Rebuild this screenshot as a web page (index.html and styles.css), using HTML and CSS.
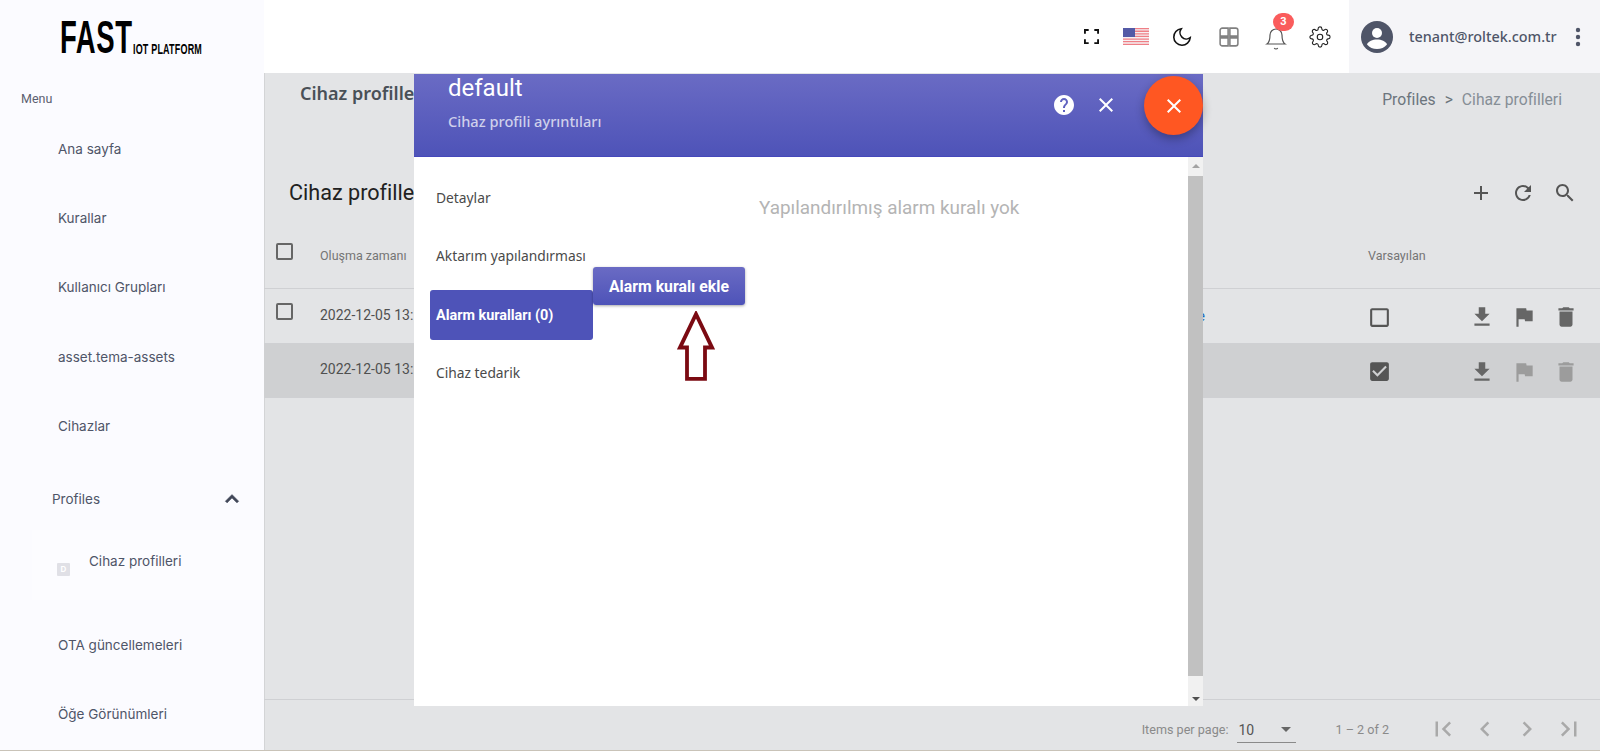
FILE: index.html
```html
<!DOCTYPE html>
<html lang="tr">
<head>
<meta charset="utf-8">
<title>Cihaz profilleri</title>
<link rel="stylesheet" href="styles.css">
</head>
<body>
<div class="app">
  <aside class="sidebar">
    <div class="logo"><span class="logo-big"><b>FAST</b></span><span class="logo-small"><b>IOT PLATFORM</b></span></div>
    <div class="menu-label">Menu</div>
    <nav class="menu">
      <a class="menu-item">Ana sayfa</a>
      <a class="menu-item">Kurallar</a>
      <a class="menu-item">Kullanıcı Grupları</a>
      <a class="menu-item">asset.tema-assets</a>
      <a class="menu-item">Cihazlar</a>
      <div class="menu-group">
        <span>Profiles</span>
        <svg class="chev" viewBox="0 0 24 24"><path d="M12 8l-6 6 1.41 1.41L12 10.83l4.59 4.58L18 14z"/></svg>
      </div>
      <div class="submenu">
        <span class="sub-icon">D</span>
        <span class="sub-text">Cihaz profilleri</span>
      </div>
      <a class="menu-item">OTA güncellemeleri</a>
      <a class="menu-item">Öğe Görünümleri</a>
    </nav>
  </aside>

  <div class="main">
    <header class="topbar">
      <div class="tools">
        <svg class="tool tool-full" viewBox="0 0 16 16"><path d="M1 5V1h4M11 1h4v4M15 11v4h-4M5 15H1v-4" fill="none" stroke="#111" stroke-width="2"/></svg>
        <svg class="tool-flag" viewBox="0 0 26 17">
          <rect width="26" height="17" fill="#f6f0f2"/>
          <path d="M0 0h26v1.3H0zM0 2.6h26v1.3H0zM0 5.2h26v1.3H0zM0 7.8h26v1.3H0zM0 10.4h26v1.3H0zM0 13h26v1.3H0zM0 15.7h26V17H0z" fill="#ef7f86"/>
          <rect width="12" height="9" fill="#545aa6"/>
        </svg>
        <svg class="tool tool-stroke" viewBox="0 0 24 24"><path d="M21 12.79A9 9 0 1 1 11.21 3 7 7 0 0 0 21 12.79z"/></svg>
        <svg class="tool tool-grid" viewBox="0 0 18 18"><path d="M3 1h5.200v7.200H1V3a2 2 0 0 1 2-2zM9.800 1H15a2 2 0 0 1 2 2v5.200H9.800zM1 9.800h7.200V17H3a2 2 0 0 1-2-2zM9.800 9.800H17V15a2 2 0 0 1-2 2H9.800z"/></svg>
        <div class="bell">
          <svg class="tool tool-thin" viewBox="0 0 24 24"><path d="M18 8A6 6 0 0 0 6 8c0 7-3 9-3 9h18s-3-2-3-9"/><path d="M13.73 21a2 2 0 0 1-3.46 0"/></svg>
          <span class="badge">3</span>
        </div>
        <svg class="tool tool-thin" viewBox="0 0 24 24"><circle cx="12" cy="12" r="3"/><path d="M19.4 15a1.65 1.65 0 0 0 .33 1.82l.06.06a2 2 0 0 1 0 2.83 2 2 0 0 1-2.83 0l-.06-.06a1.65 1.65 0 0 0-1.82-.33 1.65 1.65 0 0 0-1 1.51V21a2 2 0 0 1-2 2 2 2 0 0 1-2-2v-.09A1.65 1.65 0 0 0 9 19.4a1.65 1.65 0 0 0-1.82.33l-.06.06a2 2 0 0 1-2.83 0 2 2 0 0 1 0-2.83l.06-.06a1.65 1.65 0 0 0 .33-1.82 1.65 1.65 0 0 0-1.51-1H3a2 2 0 0 1-2-2 2 2 0 0 1 2-2h.09A1.65 1.65 0 0 0 4.6 9a1.65 1.65 0 0 0-.33-1.82l-.06-.06a2 2 0 0 1 0-2.83 2 2 0 0 1 2.83 0l.06.06a1.65 1.65 0 0 0 1.82.33H9a1.65 1.65 0 0 0 1-1.51V3a2 2 0 0 1 2-2 2 2 0 0 1 2 2v.09a1.65 1.65 0 0 0 1 1.51 1.65 1.65 0 0 0 1.82-.33l.06-.06a2 2 0 0 1 2.83 0 2 2 0 0 1 0 2.83l-.06.06a1.65 1.65 0 0 0-.33 1.82V9a1.65 1.65 0 0 0 1.51 1H21a2 2 0 0 1 2 2 2 2 0 0 1-2 2h-.09a1.65 1.65 0 0 0-1.51 1z"/></svg>
      </div>
      <div class="user">
        <svg class="avatar" viewBox="0 0 32 32"><circle cx="16" cy="16" r="16" fill="#4f5568"/><circle cx="16" cy="12" r="5" fill="#fff"/><path d="M6 23.5c1.5-3.5 5.5-5 10-5s8.500 1.500 10 5c-2.500 3-6 4.500-10 4.500s-7.500-1.500-10-4.500z" fill="#fff"/></svg>
        <span class="user-mail">tenant@roltek.com.tr</span>
        <svg class="more" viewBox="0 0 6 20"><circle cx="3" cy="3" r="2.200"/><circle cx="3" cy="10" r="2.200"/><circle cx="3" cy="17" r="2.200"/></svg>
      </div>
    </header>

    <main class="content">
      <div class="page-head">
        <h1 class="page-title">Cihaz profilleri</h1>
        <div class="crumbs"><span>Profiles</span><span class="crumb-sep">&gt;</span><span class="crumb-last">Cihaz profilleri</span></div>
      </div>
      <div class="card-head">
        <h2 class="card-title">Cihaz profilleri</h2>
        <div class="icon-row">
          <svg class="ic ic-dark" viewBox="0 0 24 24"><path d="M19 13h-6v6h-2v-6H5v-2h6V5h2v6h6v2z"/></svg>
          <svg class="ic ic-dark" viewBox="0 0 24 24"><path d="M17.65 6.35C16.2 4.9 14.21 4 12 4c-4.420 0-7.990 3.580-7.990 8s3.570 8 7.990 8c3.730 0 6.840-2.550 7.730-6h-2.080c-.82 2.330-3.040 4-5.650 4-3.310 0-6-2.690-6-6s2.690-6 6-6c1.660 0 3.140.69 4.220 1.780L13 11h7V4l-2.350 2.350z"/></svg>
          <svg class="ic ic-dark" viewBox="0 0 24 24"><path d="M15.500 14h-.79l-.28-.27C15.410 12.590 16 11.110 16 9.500 16 5.910 13.090 3 9.500 3S3 5.910 3 9.500 5.910 16 9.500 16c1.610 0 3.090-.59 4.230-1.570l.27.28v.79l5 4.990L20.490 19l-4.990-5zm-6 0C7.010 14 5 11.990 5 9.500S7.010 5 9.500 5 14 7.010 14 9.500 11.990 14 9.500 14z"/></svg>
        </div>
      </div>

      <div class="table">
        <div class="row row-head">
          <span class="box box-top"></span>
          <span class="cell-head">Oluşma zamanı</span>
          <span></span>
          <span class="cell-head">Varsayılan</span>
          <span></span>
        </div>
        <div class="row">
          <span class="box box-top"></span>
          <span class="cell">2022-12-05 13:</span>
          <a class="cell-link">default profile</a>
          <svg class="check" viewBox="0 0 24 24"><path d="M19 5v14H5V5h14m0-2H5c-1.100 0-2 .9-2 2v14c0 1.100.9 2 2 2h14c1.100 0 2-.9 2-2V5c0-1.100-.9-2-2-2z"/></svg>
          <div class="icon-row row-actions">
            <svg class="ic ic-row" viewBox="0 0 24 24"><path d="M19 9h-4V3H9v6H5l7 7 7-7zM5 18v2h14v-2H5z"/></svg>
            <svg class="ic ic-row" viewBox="0 0 24 24"><path d="M14.400 6L14 4H5v17h2v-7h5.600l.4 2h7V6z"/></svg>
            <svg class="ic ic-row" viewBox="0 0 24 24"><path d="M6 19c0 1.100.9 2 2 2h8c1.100 0 2-.9 2-2V7H6v12zM19 4h-3.500l-1-1h-5l-1 1H5v2h14V4z"/></svg>
          </div>
        </div>
        <div class="row row-selected">
          <span></span>
          <span class="cell">2022-12-05 13:</span>
          <span></span>
          <svg class="check" viewBox="0 0 24 24"><path d="M19 3H5c-1.110 0-2 .9-2 2v14c0 1.100.89 2 2 2h14c1.110 0 2-.9 2-2V5c0-1.100-.89-2-2-2zm-9 14l-5-5 1.410-1.410L10 14.170l7.590-7.590L19 8l-9 9z"/></svg>
          <div class="icon-row row-actions">
            <svg class="ic ic-row" viewBox="0 0 24 24"><path d="M19 9h-4V3H9v6H5l7 7 7-7zM5 18v2h14v-2H5z"/></svg>
            <svg class="ic ic-off" viewBox="0 0 24 24"><path d="M14.400 6L14 4H5v17h2v-7h5.600l.4 2h7V6z"/></svg>
            <svg class="ic ic-off" viewBox="0 0 24 24"><path d="M6 19c0 1.100.9 2 2 2h8c1.100 0 2-.9 2-2V7H6v12zM19 4h-3.500l-1-1h-5l-1 1H5v2h14V4z"/></svg>
          </div>
        </div>
      </div>

      <footer class="pager">
        <span class="pager-label">Items per page:</span>
        <div class="pager-select"><span>10</span><i class="caret"></i></div>
        <span class="pager-range">1 – 2 of 2</span>
        <div class="icon-row pager-icons">
          <svg class="ic ic-pg" viewBox="0 0 24 24"><path d="M18.410 16.590L13.820 12l4.590-4.590L17 6l-6 6 6 6zM6 6h2v12H6z"/></svg>
          <svg class="ic ic-pg" viewBox="0 0 24 24"><path d="M15.410 7.410L14 6l-6 6 6 6 1.410-1.410L10.830 12z"/></svg>
          <svg class="ic ic-pg" viewBox="0 0 24 24"><path d="M10 6L8.590 7.410 13.170 12l-4.580 4.590L10 18l6-6z"/></svg>
          <svg class="ic ic-pg" viewBox="0 0 24 24"><path d="M5.590 7.410L10.180 12l-4.590 4.590L7 18l6-6-6-6zM16 6h2v12h-2z"/></svg>
        </div>
      </footer>
    </main>
  </div>
</div>

<section class="modal">
  <div class="modal-head">
    <div class="modal-titles">
      <div class="modal-title">default</div>
      <div class="modal-sub">Cihaz profili ayrıntıları</div>
    </div>
    <svg class="head-ic" viewBox="0 0 24 24"><path d="M12 2C6.480 2 2 6.480 2 12s4.480 10 10 10 10-4.480 10-10S17.520 2 12 2zm1 17h-2v-2h2v2zm2.070-7.750l-.9.92C13.450 12.900 13 13.500 13 15h-2v-.5c0-1.100.45-2.100 1.170-2.830l1.240-1.260c.37-.36.59-.86.59-1.410 0-1.100-.9-2-2-2s-2 .9-2 2H8c0-2.210 1.790-4 4-4s4 1.790 4 4c0 .88-.36 1.680-.93 2.250z"/></svg>
    <svg class="head-ic" viewBox="0 0 24 24"><path d="M19 6.410L17.590 5 12 10.590 6.410 5 5 6.410 10.590 12 5 17.590 6.410 19 12 13.410 17.590 19 19 17.590 13.410 12z"/></svg>
    <button class="fab"><svg viewBox="0 0 24 24"><path d="M19 6.410L17.590 5 12 10.590 6.410 5 5 6.410 10.590 12 5 17.590 6.410 19 12 13.410 17.590 19 19 17.590 13.410 12z"/></svg></button>
  </div>
  <div class="modal-body">
    <div class="tabs">
      <div class="tab">Detaylar</div>
      <div class="tab">Aktarım yapılandırması</div>
      <div class="tab tab-active">Alarm kuralları (0)</div>
      <div class="tab">Cihaz tedarik</div>
    </div>
    <div class="panel">Yapılandırılmış alarm kuralı yok</div>
    <div class="scrollbar">
      <i class="sb-up"></i>
      <i class="sb-thumb"></i>
      <i class="sb-down"></i>
    </div>
    <button class="add-rule">Alarm kuralı ekle</button>
    <svg class="arrow" viewBox="0 0 38 68" preserveAspectRatio="none"><path d="M19 3L35 35H28V65H10V35H3z" fill="#fff" stroke="#7b0a12" stroke-width="3.800"/></svg>
  </div>
</section>
</body>
</html>
```
FILE: styles.css
```css
* { box-sizing: border-box; }
html, body { margin: 0; height: 100%; overflow: hidden; }
body { font-family: Roboto, "Liberation Sans", sans-serif; background: #fff; position: relative; }

.app { display: grid; grid-template-columns: 264px 1fr; height: 751px; border-bottom: 1px solid #c9c3b8; }

/* sidebar */
.sidebar { background: #fbfbff; overflow: hidden; }
.logo { height: 73px; padding: 20px 0 0 60px; display: flex; align-items: flex-start; color: #000; }
.logo-big { width: 73px; height: 34px; flex: none; }
.logo-big b { display: block; font: 700 47px/34px "Liberation Sans", sans-serif; transform: scaleX(.585); transform-origin: 0 0; white-space: nowrap; letter-spacing: 1px; }
.logo-small { width: 70px; height: 12px; margin-top: 23px; flex: none; }
.logo-small b { display: block; font: 700 15px/12px "Liberation Sans", sans-serif; transform: scaleX(.6); transform-origin: 0 0; white-space: nowrap; letter-spacing: .3px; }
.menu-label { font-size: 12.500px; color: #5b6070; padding: 18px 0 0 21px; height: 41px; }
.menu-item { display: flex; align-items: center; height: 69.400px; padding-left: 58px; font: 400 13.500px Inter, sans-serif; color: #4f5568; }
.menu-group { display: flex; align-items: center; justify-content: space-between; height: 69px; padding: 7px 19px 0 52px; font: 400 13.500px Inter, sans-serif; color: #4f5568; }
.chev { width: 26px; height: 26px; fill: #3f4557; stroke: #3f4557; stroke-width: .8; }
.submenu { margin-left: 32px; height: 70px; background: #fcfcff; display: flex; align-items: flex-start; padding: 23px 0 0 25px; margin-bottom: 10px; font: 400 13.500px Inter, sans-serif; }
.sub-icon { width: 13px; height: 13px; margin-top: 10px; background: #e0e0e6; color: #fff; font-size: 8px; font-weight: 700; text-align: center; line-height: 13px; border-radius: 1px; }
.sub-text { margin-left: 19px; color: #4f5568; }

/* top bar */
.main { display: flex; flex-direction: column; min-width: 0; }
.topbar { height: 73px; display: flex; justify-content: flex-end; background: #fff; flex: none; }
.tools { display: flex; align-items: center; padding-right: 18px; gap: 20px; }
.tool { width: 22px; height: 22px; }
.tool-full { width: 15px; height: 15px; margin-right: 4px; }
.tool-flag { width: 26px; height: 17px; margin-right: 2px; }
.tool-stroke { fill: none; stroke: #111; stroke-width: 1.700; }
.tool-grid { width: 20px; height: 20px; margin: 0 6px; fill: none; stroke: #808080; stroke-width: 1.400; }
.tool-thin { fill: none; stroke: #222; stroke-width: 1.200; }
.bell { position: relative; display: flex; margin-left: -1px; margin-right: 1px; }
.bell .tool { width: 24px; height: 24px; stroke: #555; margin-top: 5px; }
.badge { position: absolute; left: 9px; top: -9px; width: 21px; height: 18px; border-radius: 9px; background: #fa5c5c; color: #fff; font-size: 11px; font-weight: 700; text-align: center; line-height: 18px; }
.user { width: 251px; background: #f5f5f8; display: flex; align-items: center; padding-left: 12px; }
.avatar { width: 32px; height: 32px; flex: none; }
.user-mail { margin-left: 16px; font: 500 14.400px "Noto Sans", sans-serif; color: #4f5568; white-space: nowrap; }
.more { width: 6px; height: 20px; fill: #4f5568; margin-left: 18px; flex: none; }

/* page */
.content { flex: 1; background: #e3e4e6; display: flex; flex-direction: column; min-height: 0; box-shadow: inset 1px 0 0 #d3d4d6; }
.page-head { height: 89px; display: flex; justify-content: space-between; padding: 8px 38px 0 36px; flex: none; }
.page-title { margin: 0; font: 600 18px/24px "Noto Sans", sans-serif; color: #495057; }
.crumbs { display: flex; gap: 9px; padding-top: 8px; font-size: 15.700px; line-height: 22px; color: #6c757d; }
.crumb-last { color: #868e96; }
.card-head { height: 60px; display: flex; justify-content: space-between; align-items: center; padding: 1px 23px 0 25px; flex: none; }
.card-title { margin: 0; font: 400 21.600px/28px Roboto, sans-serif; color: #212121; }
.icon-row { display: flex; gap: 18px; align-items: center; }
.ic { width: 24px; height: 24px; display: block; flex: none; }
.ic-dark { fill: #555; }
.ic-row { fill: #666; }
.ic-off { fill: #9c9c9c; }
.ic-pg { fill: #a9a9a9; width: 30px; height: 30px; }
.row-actions { gap: 16px; margin-top: 3px; }
.row-actions .ic { width: 26px; height: 26px; }

.table { flex: 1; min-height: 0; }
.row { display: grid; grid-template-columns: 44px 724px 324px 101px 1fr; align-items: center; height: 54.500px; border-bottom: 1px solid #cfd0d3; font-size: 14px; color: #555; padding-left: 12px; }
.row-head { height: 67px; }
.row-selected { background: #cfd0d2; }
.box { width: 17px; height: 17px; border: 2px solid #666; border-radius: 2px; display: block; }
.box-top { margin-bottom: 8px; }
.cell { font-size: 14px; color: #505050; white-space: nowrap; margin-bottom: 2px; }
.cell-head { font-size: 12.500px; color: #757575; white-space: nowrap; }
.cell-link { color: #1565c0; text-align: right; padding-right: 163px; white-space: nowrap; }
.check { width: 25px; height: 25px; fill: #555; margin-left: -1px; margin-top: 3px; }

.pager { height: 51px; flex: none; display: flex; align-items: center; justify-content: flex-end; padding: 8px 16px 0 0; border-top: 1px solid #cfd0d3; font-size: 12.600px; color: #8a8a8a; }
.pager-icons { margin-left: 39px; gap: 12px; }
.pager-select { width: 59px; height: 26px; margin-left: 9px; border-bottom: 1px solid #8a8a8a; display: flex; align-items: center; justify-content: space-between; padding: 0 5px 0 1px; color: #555; font-size: 14px; position: relative; top: 1px; }
.caret { width: 0; height: 0; border: 5px solid transparent; border-top-color: #666; border-bottom: 0; }
.pager-range { margin-left: 39px; }

/* modal */
.modal { position: absolute; left: 414px; top: 74px; width: 789px; height: 632px; background: #fff; display: flex; flex-direction: column; }
.modal-head { height: 83px; flex: none; display: flex; align-items: flex-start; color: #fff; background: linear-gradient(#6a6bc4, #4e53b8); padding: 0 0 0 34px; position: relative; border-bottom: 1px solid #4548bb; }
.modal-titles { flex: 1; }
.modal-title { font-size: 24px; line-height: 28px; }
.modal-sub { font: 500 14.600px/20px "Noto Sans", sans-serif; margin-top: 9px; color: rgba(255,255,255,.72); }
.head-ic { width: 24px; height: 24px; fill: #fff; margin: 19px 18px 0 0; }
.head-ic + .head-ic { margin-right: 85px; }
.fab { position: absolute; right: 0; top: 2px; width: 59px; height: 59px; border-radius: 50%; border: 0; padding: 0; background: #ff5722; box-shadow: 0 4px 10px rgba(0,0,0,.3); display: flex; align-items: center; justify-content: center; }
.fab svg { width: 24px; height: 24px; fill: #fff; }

.modal-body { flex: 1; display: flex; position: relative; min-height: 0; }
.tabs { width: 179px; padding: 11px 0 0 16px; flex: none; }
.tab { height: 58px; display: flex; align-items: center; padding-left: 6px; font: 400 13.800px "Noto Sans", sans-serif; color: #4a4a4a; white-space: nowrap; }
.tab-active { height: 50px; margin: 6px 0 3px; background: #4e53b8; color: #fff; border-radius: 3px; font: 700 14.400px Roboto, sans-serif; }
.panel { flex: 1; padding: 38px 0 0 166px; font-size: 18.900px; font-weight: 400; color: #b4b4b4; line-height: 26px; }
.scrollbar { width: 15px; background: #f1f1f1; display: flex; flex-direction: column; align-items: center; padding: 7px 0 5px; flex: none; }
.sb-up { width: 0; height: 0; border: 4px solid transparent; border-bottom-color: #a3a3a3; border-top: 0; }
.sb-thumb { flex: 1; width: 100%; background: #c1c1c1; margin: 8px 0 21px; }
.sb-down { width: 0; height: 0; border: 4px solid transparent; border-top-color: #505050; border-bottom: 0; }
.add-rule { position: absolute; left: 179px; top: 110px; width: 152px; height: 38px; border: 0; border-radius: 3px; padding: 1px 0 0; background: linear-gradient(#6a6bc4, #4e53b8); color: #fff; font: 700 15.800px Roboto, sans-serif; box-shadow: 0 1px 3px rgba(0,0,0,.35); }
.arrow { position: absolute; left: 263px; top: 154px; width: 38px; height: 71px; }
```
